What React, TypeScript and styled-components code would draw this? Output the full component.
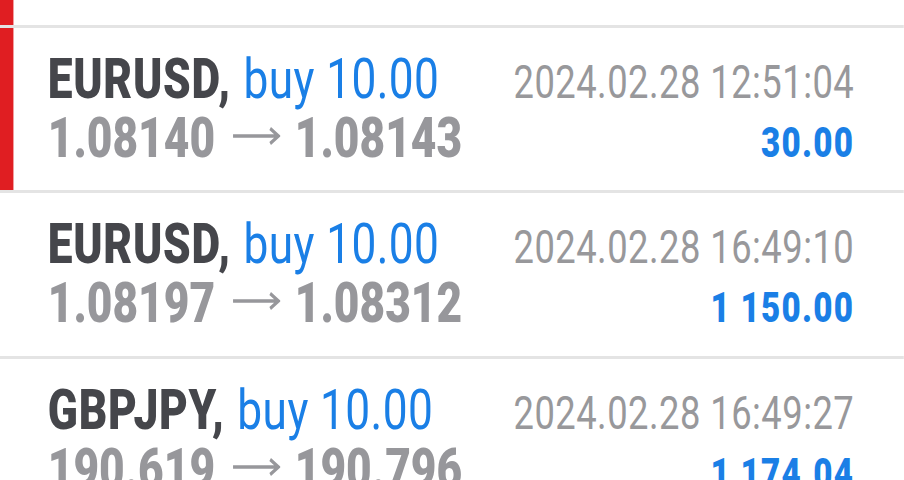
import { FC } from "react";
import styled, { createGlobalStyle } from "styled-components";

// the source capture is squeezed horizontally, so the list is laid out wider and scaled back
const SQUEEZE = 0.79;
const VIEW_W = 904;

type Trade = {
  symbol: string;
  side: string;
  volume: string;
  openPrice: string;
  closePrice: string;
  time: string;
  profit: string;
  flagged?: boolean;
};

const trades: Trade[] = [
  {
    symbol: "EURUSD",
    side: "buy",
    volume: "10.00",
    openPrice: "1.08140",
    closePrice: "1.08143",
    time: "2024.02.28 12:51:04",
    profit: "30.00",
    flagged: true,
  },
  {
    symbol: "EURUSD",
    side: "buy",
    volume: "10.00",
    openPrice: "1.08197",
    closePrice: "1.08312",
    time: "2024.02.28 16:49:10",
    profit: "1 150.00",
  },
  {
    symbol: "GBPJPY",
    side: "buy",
    volume: "10.00",
    openPrice: "190.619",
    closePrice: "190.796",
    time: "2024.02.28 16:49:27",
    profit: "1 174.04",
  },
];

const GlobalStyle = createGlobalStyle`
  html, body {
    margin: 0;
    padding: 0;
    background: #ffffff;
    overflow: hidden;
  }
  body {
    font-family: Roboto, "Noto Sans", sans-serif;
  }
`;

const Viewport = styled.div`
  width: ${VIEW_W}px;
  height: 480px;
  overflow: hidden;
  background: #ffffff;
`;

const List = styled.div`
  width: ${VIEW_W / SQUEEZE}px;
  margin-top: -138px;
  transform: scaleX(${SQUEEZE});
  transform-origin: 0 0;
`;

const Row = styled.div`
  display: flex;
  height: 162.5px;
  border-bottom: 3px solid #e4e4e4;
`;

const Marker = styled.div<{ $on?: boolean }>`
  width: 16.5px;
  flex-shrink: 0;
  background: ${(p) => (p.$on ? "#e01e22" : "transparent")};
`;

const Body = styled.div`
  flex: 1;
  display: flex;
  flex-direction: column;
  padding: 22px 63px 0 44px;
`;

const Line = styled.div`
  display: flex;
  align-items: baseline;
  justify-content: space-between;
  height: 59px;
  line-height: 59px;
  white-space: nowrap;
`;

const Symbol = styled.span`
  font-size: 56px;
  font-weight: 900;
  letter-spacing: 0.9px;
  color: #45464b;
`;

const Side = styled.span`
  margin-left: 16px;
  font-size: 56px;
  font-weight: 400;
  letter-spacing: 0.5px;
  color: #1a7fe6;
`;

const Prices = styled.span`
  font-size: 56px;
  font-weight: 900;
  color: #97979b;
`;

const Arrow = styled.svg`
  width: 61px;
  height: 18px;
  margin: 0 18px 0 22px;
  vertical-align: 12px;
`;

const Time = styled.span`
  font-size: 46px;
  line-height: 46px;
  font-weight: 400;
  letter-spacing: 0.6px;
  color: #98989b;
`;

const Profit = styled.span`
  font-size: 42px;
  line-height: 42px;
  font-weight: 900;
  letter-spacing: 1.6px;
  color: #1a7fe6;
`;

const TradeRow: FC<{ trade: Trade }> = ({ trade }) => (
  <Row>
    <Marker $on={trade.flagged} />
    <Body>
      <Line>
        <span>
          <Symbol>{trade.symbol},</Symbol>
          <Side>
            {trade.side} {trade.volume}
          </Side>
        </span>
        <Time>{trade.time}</Time>
      </Line>
      <Line>
        <Prices>
          {trade.openPrice}
          <Arrow viewBox="0 0 61 18" aria-label="→">
            <path
              d="M1 9H58M48 1.5L58.5 9L48 16.5"
              fill="none"
              stroke="#97979b"
              strokeWidth="3.5"
            />
          </Arrow>
          {trade.closePrice}
        </Prices>
        <Profit>{trade.profit}</Profit>
      </Line>
    </Body>
  </Row>
);

const App: FC = () => {
  return (
    <Viewport>
      <GlobalStyle />
      <List>
        {/* previous trade, scrolled mostly out of view */}
        <Row>
          <Marker $on />
          <Body />
        </Row>
        {trades.map((t, i) => (
          <TradeRow key={i} trade={t} />
        ))}
      </List>
    </Viewport>
  );
};

export default App;
